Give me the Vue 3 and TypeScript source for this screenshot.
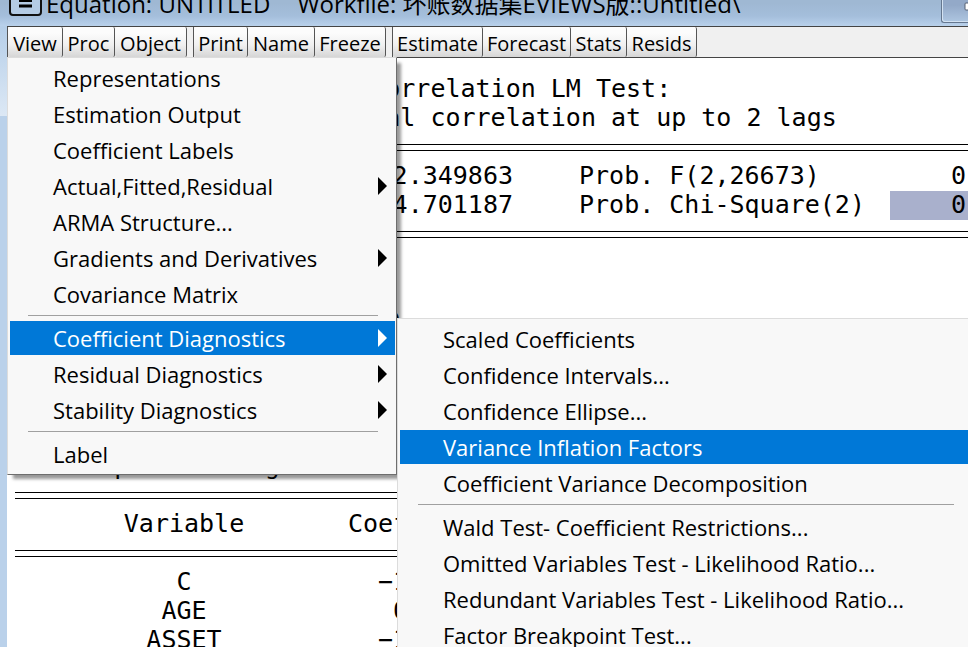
<script setup lang="ts">
interface ToolButton {
  label: string
  width: number
}

interface MenuItem {
  label: string
  submenu?: boolean
  active?: boolean
}

const toolGroups: ToolButton[][] = [
  [
    { label: 'View', width: 55 },
    { label: 'Proc', width: 52 },
    { label: 'Object', width: 72 },
  ],
  [
    { label: 'Print', width: 54 },
    { label: 'Name', width: 67 },
    { label: 'Freeze', width: 71 },
  ],
  [
    { label: 'Estimate', width: 90 },
    { label: 'Forecast', width: 88 },
    { label: 'Stats', width: 56 },
    { label: 'Resids', width: 70 },
  ],
]

const viewMenu: MenuItem[][] = [
  [
    { label: 'Representations' },
    { label: 'Estimation Output' },
    { label: 'Coefficient Labels' },
    { label: 'Actual,Fitted,Residual', submenu: true },
    { label: 'ARMA Structure...' },
    { label: 'Gradients and Derivatives', submenu: true },
    { label: 'Covariance Matrix' },
  ],
  [
    { label: 'Coefficient Diagnostics', submenu: true, active: true },
    { label: 'Residual Diagnostics', submenu: true },
    { label: 'Stability Diagnostics', submenu: true },
  ],
  [{ label: 'Label' }],
]

const coefficientMenu: MenuItem[][] = [
  [
    { label: 'Scaled Coefficients' },
    { label: 'Confidence Intervals...' },
    { label: 'Confidence Ellipse...' },
    { label: 'Variance Inflation Factors', active: true },
    { label: 'Coefficient Variance Decomposition' },
  ],
  [
    { label: 'Wald Test- Coefficient Restrictions...' },
    { label: 'Omitted Variables Test - Likelihood Ratio...' },
    { label: 'Redundant Variables Test - Likelihood Ratio...' },
    { label: 'Factor Breakpoint Test...' },
  ],
]

const statistics = [
  { value: '2.349863', name: 'Prob. F(2,26673)', prob: '0', selected: false },
  { value: '4.701187', name: 'Prob. Chi-Square(2)', prob: '0', selected: true },
]

const coefficients = [
  { name: 'C', value: '−1' },
  { name: 'AGE', value: ' 0' },
  { name: 'ASSET', value: '−1' },
]
</script>

<template>
  <div class="window">
    <header class="titlebar">
      <svg class="app-icon" width="33" height="36" viewBox="0 0 33 36" aria-hidden="true">
        <rect x="1" y="1" width="31" height="34" rx="3" fill="#b4cbe4" stroke="#111" stroke-width="2" />
        <path d="M10 20.5h13M10 26h13" stroke="#000" stroke-width="3" />
      </svg>
      <h1 class="title"><span>Equation: UNTITLED</span><span>Workfile: 坏账数据集EVIEWS版::Untitled\</span></h1>
      <button class="caption-button" type="button" aria-label="Minimize">
        <svg width="14" height="9" viewBox="0 0 14 9" aria-hidden="true">
          <rect x="1" y="1" width="12" height="7" rx="1" fill="#fff" stroke="#555f70" />
        </svg>
      </button>
    </header>

    <div class="body">
      <div class="frame"></div>
      <main class="client">
        <nav class="toolbar">
          <div v-for="(group, g) in toolGroups" :key="g" class="group">
            <button
              v-for="tool in group"
              :key="tool.label"
              type="button"
              class="tool"
              :style="{ width: tool.width + 'px' }"
            >
              {{ tool.label }}
            </button>
          </div>
        </nav>

        <section class="report">
          <p class="line">Breusch-Godfrey Serial Correlation LM Test:</p>
          <p class="line">Null hypothesis: No serial correlation at up to 2 lags</p>
          <div class="rule"></div>
          <table class="statistics">
            <tbody>
              <tr v-for="row in statistics" :key="row.name">
                <td class="stat-value">{{ row.value }}</td>
                <td class="stat-name">{{ row.name }}</td>
                <td class="stat-prob" :class="{ selected: row.selected }">{{ row.prob }}</td>
              </tr>
            </tbody>
          </table>
          <div class="rule"></div>
          <div class="equation">
            <p class="line">Dependent Variable: RESID</p>
            <p class="line">Presample missing value lagged residuals set to zero.</p>
          </div>
          <div class="rule"></div>
          <table class="coefficients">
            <thead>
              <tr>
                <th class="coef-name">Variable</th>
                <th class="coef-head">Coefficient</th>
              </tr>
              <tr>
                <td colspan="2"><div class="rule"></div></td>
              </tr>
            </thead>
            <tbody>
              <tr v-for="row in coefficients" :key="row.name">
                <td class="coef-name">{{ row.name }}</td>
                <td class="coef-value">{{ row.value }}</td>
              </tr>
            </tbody>
          </table>
        </section>
      </main>
    </div>

    <div class="menu view-menu" role="menu">
      <div v-for="(section, s) in viewMenu" :key="s" class="section">
        <button
          v-for="item in section"
          :key="item.label"
          type="button"
          role="menuitem"
          class="item"
          :class="{ active: item.active }"
        >
          <span>{{ item.label }}</span>
          <svg v-if="item.submenu" class="arrow" width="9" height="18" viewBox="0 0 9 18" aria-hidden="true">
            <path d="M0 0L9 9L0 18Z" fill="currentColor" />
          </svg>
        </button>
      </div>
    </div>

    <div class="menu sub-menu" role="menu">
      <div v-for="(section, s) in coefficientMenu" :key="s" class="section">
        <button
          v-for="item in section"
          :key="item.label"
          type="button"
          role="menuitem"
          class="item"
          :class="{ active: item.active }"
        >
          <span>{{ item.label }}</span>
        </button>
      </div>
    </div>
  </div>
</template>

<style>
body {
  margin: 0;
  overflow: hidden;
}
</style>

<style scoped>
.window {
  position: relative;
  display: flex;
  flex-direction: column;
  height: 100vh;
  overflow: hidden;
  background: #bad1ea;
  color: #000;
  font-family: 'Open Sans', 'Noto Sans CJK SC', sans-serif;
}

button {
  margin: 0;
  padding: 0;
  border: 0;
  background: none;
  color: inherit;
  font: inherit;
}

.titlebar {
  display: flex;
  flex: none;
  align-items: center;
  height: 46px;
  margin-top: -20px;
  padding-left: 9px;
  background: linear-gradient(#9fb8d3 50%, #a4bedb 78%, #b9d1eb);
}

.app-icon {
  flex: none;
  margin-bottom: 10px;
}

.title {
  display: flex;
  flex: 1;
  gap: 27px;
  margin: 0 0 0 4px;
  padding-top: 2px;
  font-size: 24px;
  font-weight: 400;
  line-height: 46px;
  white-space: nowrap;
}

.caption-button {
  display: flex;
  align-items: center;
  align-self: flex-start;
  width: 27px;
  height: 43px;
  padding: 10px 0 0 22px;
  box-sizing: border-box;
  overflow: hidden;
  border: 1px solid #65778f;
  border-width: 0 0 1px 1px;
  border-radius: 0 0 0 3px;
  background: linear-gradient(#93a9c8 60%, #aec6e1);
  box-shadow: inset 1px -1px #d3e2f2;
}

.caption-button svg {
  flex: none;
}

.body {
  display: flex;
  flex: 1;
  min-height: 0;
}

.frame {
  flex: none;
  width: 7px;
  height: 90px;
  background: linear-gradient(#b5cee8, #dce8f5);
}

.client {
  flex: 1;
  min-width: 0;
  background: #fff;
}

.toolbar {
  display: flex;
  gap: 6px;
  height: 30px;
  border-top: 1px solid #444;
  border-bottom: 1px solid #444;
  background: #f0f0f0;
}

.group {
  display: flex;
  border-left: 1px solid #555;
}

.tool {
  box-sizing: border-box;
  padding-top: 3px;
  border-right: 1px solid #555;
  border-radius: 2px;
  background: linear-gradient(#fcfcfc 20%, #f0f0f0 60%, #d6d6d6);
  font-size: 20px;
  line-height: 27px;
  text-align: center;
  white-space: nowrap;
}

.report {
  padding: 17px 0 0 8px;
  overflow: hidden;
  font-family: 'DejaVu Sans Mono', monospace;
  font-size: 25px;
  line-height: 27px;
  white-space: pre;
}

.line {
  height: 29px;
  margin: 0;
  padding-left: 9px;
}

.rule {
  height: 5px;
  margin: 11px 0;
  border: 1px solid #000;
  border-width: 1px 0;
}

table {
  width: 100%;
  table-layout: fixed;
  border-collapse: collapse;
}

td,
th {
  height: 29px;
  padding: 0;
  font-weight: 400;
  text-align: left;
  vertical-align: top;
}

.stat-value {
  width: 498px;
  text-align: right;
}

.stat-name {
  width: 311px;
  padding-left: 66px;
}

.stat-prob {
  padding-left: 61px;
}

.selected {
  background: #a9b0cc;
}

.equation {
  display: flex;
  flex-direction: column;
  justify-content: space-between;
  height: 174px;
  padding-top: 58px;
}

.coef-name {
  width: 318px;
  padding-left: 10px;
  text-align: center;
}

.coef-head {
  padding-left: 5px;
}

.coef-value {
  padding-left: 35px;
}

.menu {
  position: absolute;
  box-sizing: border-box;
  border: 1px solid #dcdcdc;
  background: #f8f8f8;
  font-size: 22px;
}

.view-menu {
  top: 57px;
  left: 7px;
  width: 390px;
  padding: 2px 1px 2px 2px;
  border-right-color: #6e6e6e;
  border-bottom-color: #6e6e6e;
  box-shadow: 5px 5px 3px -1px rgba(0, 0, 0, 0.4);
}

.sub-menu {
  top: 318px;
  left: 397px;
  width: 577px;
  padding: 2px;
}

.section {
  display: flex;
  flex-direction: column;
}

.section + .section::before {
  content: '';
  height: 1px;
  margin: 3px 17px 4px 18px;
  background: #a0a0a0;
}

.item {
  display: flex;
  align-items: center;
  justify-content: space-between;
  box-sizing: border-box;
  height: 34px;
  margin: 1px 0;
  padding: 0 8px 0 43px;
  line-height: 34px;
  white-space: nowrap;
}

.active {
  background: #0078d7;
  color: #fff;
}

.arrow {
  flex: none;
}
</style>
